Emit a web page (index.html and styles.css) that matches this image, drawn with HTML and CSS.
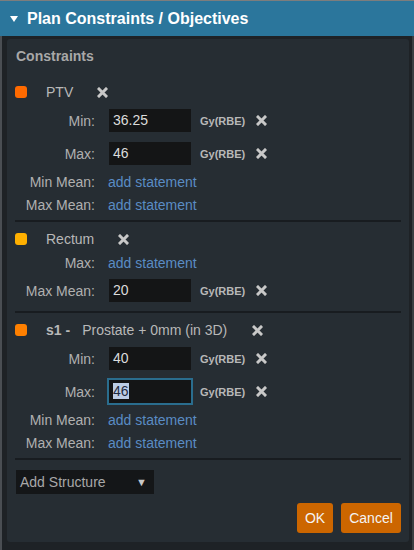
FILE: index.html
```html
<!DOCTYPE html>
<html>
<head>
<meta charset="utf-8">
<title>Plan Constraints / Objectives</title>
<link rel="stylesheet" href="styles.css">
</head>
<body>
<div class="dialog">
  <div class="titlebar">
    <span class="caret"></span>
    <span class="title">Plan Constraints / Objectives</span>
  </div>
  <div class="content">
    <div class="panel">
      <div class="heading">Constraints</div>

      <div class="structure">
        <div class="struct-head">
          <span class="dot dot-ptv"></span>
          <span class="name">PTV</span>
          <svg class="x x-head" viewBox="0 0 11 11"><path d="M2 2 L9 9 M9 2 L2 9"/></svg>
        </div>
        <div class="row input-row">
          <span class="label">Min:</span>
          <div class="field">36.25</div>
          <span class="unit">Gy(RBE)</span>
          <svg class="x" viewBox="0 0 11 11"><path d="M2 2 L9 9 M9 2 L2 9"/></svg>
        </div>
        <div class="row input-row">
          <span class="label">Max:</span>
          <div class="field">46</div>
          <span class="unit">Gy(RBE)</span>
          <svg class="x" viewBox="0 0 11 11"><path d="M2 2 L9 9 M9 2 L2 9"/></svg>
        </div>
        <div class="row text-row">
          <span class="label">Min Mean:</span>
          <a class="link">add statement</a>
        </div>
        <div class="row text-row">
          <span class="label">Max Mean:</span>
          <a class="link">add statement</a>
        </div>
      </div>

      <div class="structure">
        <div class="struct-head">
          <span class="dot dot-rectum"></span>
          <span class="name">Rectum</span>
          <svg class="x x-head" viewBox="0 0 11 11"><path d="M2 2 L9 9 M9 2 L2 9"/></svg>
        </div>
        <div class="row text-row">
          <span class="label">Max:</span>
          <a class="link">add statement</a>
        </div>
        <div class="row input-row">
          <span class="label">Max Mean:</span>
          <div class="field">20</div>
          <span class="unit">Gy(RBE)</span>
          <svg class="x" viewBox="0 0 11 11"><path d="M2 2 L9 9 M9 2 L2 9"/></svg>
        </div>
      </div>

      <div class="structure">
        <div class="struct-head">
          <span class="dot dot-s1"></span>
          <span class="name"><b class="sid">s1 -</b><span class="desc">Prostate + 0mm (in 3D)</span></span>
          <svg class="x x-head x-s1" viewBox="0 0 11 11"><path d="M2 2 L9 9 M9 2 L2 9"/></svg>
        </div>
        <div class="row input-row">
          <span class="label">Min:</span>
          <div class="field">40</div>
          <span class="unit">Gy(RBE)</span>
          <svg class="x" viewBox="0 0 11 11"><path d="M2 2 L9 9 M9 2 L2 9"/></svg>
        </div>
        <div class="row input-row">
          <span class="label">Max:</span>
          <div class="field focused"><span class="sel">46</span></div>
          <span class="unit">Gy(RBE)</span>
          <svg class="x" viewBox="0 0 11 11"><path d="M2 2 L9 9 M9 2 L2 9"/></svg>
        </div>
        <div class="row text-row">
          <span class="label">Min Mean:</span>
          <a class="link">add statement</a>
        </div>
        <div class="row text-row">
          <span class="label">Max Mean:</span>
          <a class="link">add statement</a>
        </div>
      </div>

      <div class="select">
        <span>Add Structure</span>
        <span class="arrow">&#9660;</span>
      </div>

      <div class="actions">
        <button class="btn btn-ok">OK</button>
        <button class="btn btn-cancel">Cancel</button>
      </div>
    </div>
  </div>
</div>
</body>
</html>
```

FILE: styles.css
```css
html, body {
  margin: 0;
  padding: 0;
}
body {
  width: 414px;
  height: 550px;
  background: #1e2226;
  font-family: "Liberation Sans", Arial, sans-serif;
  font-size: 14px;
  color: #b4b4b4;
  overflow: hidden;
}
.dialog {
  width: 414px;
  height: 550px;
  box-sizing: border-box;
  border-top: 1px solid #7d7d7d;
  display: flex;
  flex-direction: column;
}
.titlebar {
  height: 35px;
  background: #2b769c;
  display: flex;
  align-items: center;
  padding-left: 10px;
  flex: none;
}
.caret {
  width: 0;
  height: 0;
  border-left: 4px solid transparent;
  border-right: 4px solid transparent;
  border-top: 6px solid #ffffff;
  margin-right: 9px;
  margin-top: 1px;
}
.title {
  color: #ffffff;
  font-weight: bold;
  font-size: 16px;
}
.content {
  flex: 1;
  border-left: 2px solid #4a4e53;
  border-right: 2px solid #3a3e42;
  padding: 3px 3px 8px 5px;
  box-sizing: border-box;
}
.panel {
  background: #262d33;
  border-radius: 3px;
  padding: 8px 8px 9px 8px;
  height: 100%;
  box-sizing: border-box;
}
.heading {
  font-weight: bold;
  line-height: 18px;
  color: #a8a8a8;
  margin-bottom: 15px;
  padding-left: 1px;
}
.structure {
  padding-bottom: 4px;
  border-bottom: 2px solid #181c20;
}
.structure + .structure {
  padding-top: 5px;
}
.struct-head {
  height: 24px;
  display: flex;
  align-items: center;
}
.dot {
  width: 12px;
  height: 12px;
  border-radius: 3px;
  flex: none;
}
.dot-ptv { background: #ff6a00; }
.dot-rectum { background: #ffb000; }
.dot-s1 { background: #ff8000; }
.name {
  margin-left: 19px;
  color: #b8b8b8;
}
.sid {
  font-weight: bold;
  margin-right: 12px;
}
.x {
  width: 11px;
  height: 11px;
  flex: none;
  stroke: #c8c8c8;
  stroke-width: 3;
  stroke-linecap: square;
  fill: none;
}
.x-head {
  margin-left: 24px;
}
.x-s1 {
  margin-left: 25px;
}
.row {
  display: flex;
  align-items: center;
}
.input-row {
  height: 33px;
}
.text-row {
  height: 23px;
}
.label {
  width: 80px;
  text-align: right;
  margin-right: 13px;
  color: #b0b0b0;
  flex: none;
}
.field {
  width: 82px;
  height: 23px;
  box-sizing: border-box;
  background: #141516;
  color: #dcdcdc;
  line-height: 23px;
  padding-left: 4px;
  margin-left: 1px;
  flex: none;
}
.field.focused {
  box-shadow: 0 0 0 2px #2a6d8e;
}
.sel {
  background: #bccde6;
  color: #1e2a40;
}
.unit {
  font-size: 11px;
  font-weight: bold;
  color: #b8b8b8;
  margin-left: 9px;
  margin-right: 11px;
}
.link {
  color: #5a8cc4;
}
.select {
  margin-top: 10px;
  margin-left: 1px;
  width: 138px;
  height: 24px;
  background: #141618;
  display: flex;
  align-items: center;
  justify-content: space-between;
  padding: 0 7px 0 4px;
  box-sizing: border-box;
  color: #a8a8a8;
}
.arrow {
  font-size: 11px;
  color: #c8c8c8;
}
.actions {
  margin-top: 9px;
  display: flex;
  justify-content: flex-end;
  gap: 8px;
}
.btn {
  height: 30px;
  border: none;
  border-radius: 3px;
  background: #cc6600;
  color: #f4f4f4;
  font-family: "Liberation Sans", Arial, sans-serif;
  font-size: 14px;
  padding: 0;
}
.btn-ok { width: 36px; }
.btn-cancel { width: 60px; }
```
